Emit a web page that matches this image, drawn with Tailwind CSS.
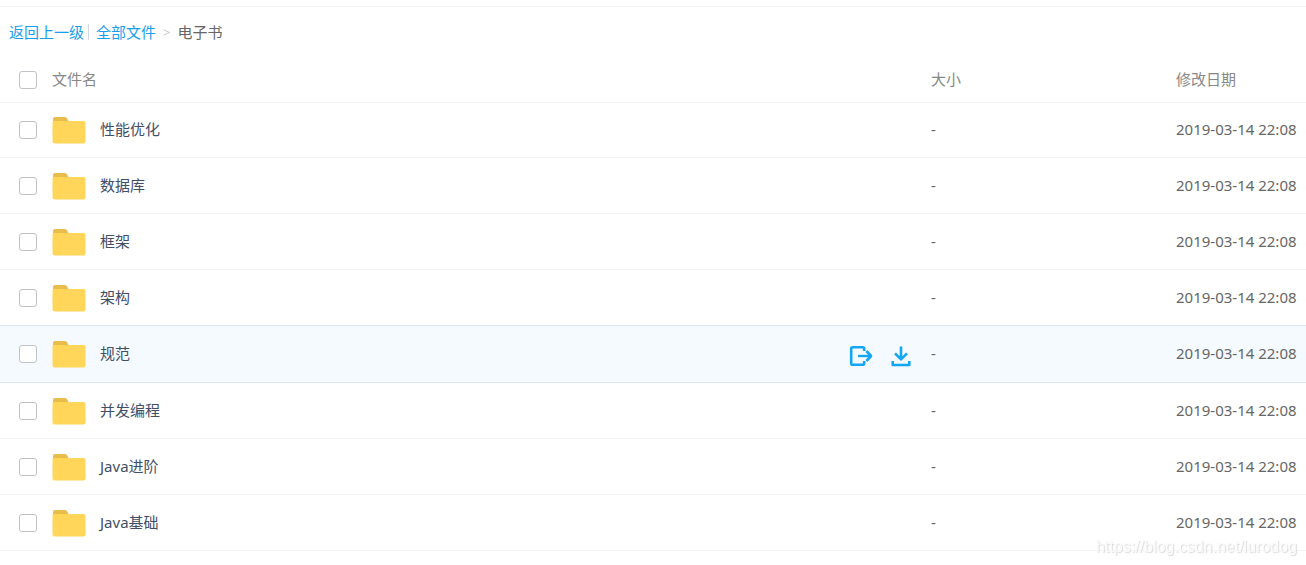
<!DOCTYPE html>
<html lang="zh-CN">
<head>
<meta charset="utf-8">
<meta name="viewport" content="width=device-width, initial-scale=1">
<title>电子书</title>
<script src="https://cdn.jsdelivr.net/npm/@tailwindcss/browser@4"></script>
</head>
<body class="bg-white font-['Noto_Sans','Noto_Sans_CJK_SC',sans-serif] text-[15px] leading-5 text-[#666]">
<svg class="hidden" aria-hidden="true">
  <symbol id="folder" viewBox="0 0 34 28">
    <path d="M1 10V3Q1 1 3 1H13Q14.500 1 15.200 2.500L16.500 5V10Z" fill="#e9bd4b"/>
    <path d="M.500 6Q.500 5 1.500 5H31.500Q33.500 5 33.500 7V25Q33.500 27.500 31.500 27.500H2.500Q.500 27.500 .500 25Z" fill="#ffd55a"/>
  </symbol>
</svg>
<div class="mt-1.5 border-t border-[#f2f4f6]">
  <nav aria-label="路径" class="flex h-12 items-center px-[9px] pt-px">
    <a href="#" class="text-[#1a9eea]">返回上一级</a>
    <span class="mx-1 h-4 w-px bg-[#d3d8e0]"></span>
    <a href="#" class="ml-[3px] text-[#1a9eea]">全部文件</a>
    <span class="mx-[7px] text-[13px] text-[#c4c8d0]">&gt;</span>
    <span>电子书</span>
  </nav>
  <table class="w-full table-fixed border-separate border-spacing-0 text-left [&_td]:border-b [&_td]:border-[#f2f4f6] [&_td]:p-0 [&_th]:border-b [&_th]:border-[#f2f4f6] [&_th]:p-0 [&_th]:font-normal">
    <colgroup><col class="w-[52px]"><col><col class="w-[245px]"><col class="w-[130px]"></colgroup>
    <thead>
      <tr class="h-12 text-[#888]">
        <th class="pt-0.5! pl-[19px]!"><input type="checkbox" aria-label="全选" class="block size-[18px] appearance-none rounded-[3px] border border-[#bfc3c8] bg-white checked:bg-[#09aaff]"></th>
        <th>文件名</th><th>大小</th><th>修改日期</th>
      </tr>
    </thead>
    <tbody id="files"></tbody>
  </table>
</div>
<p class="pointer-events-none fixed right-[9px] bottom-1.5 font-['Liberation_Sans',sans-serif] text-base text-[#fbfbfb] [text-shadow:1px_1px_1px_#dadada]">https://blog.csdn.net/lurodog</p>
<script>
const names = ['性能优化', '数据库', '框架', '架构', '规范', '并发编程', 'Java进阶', 'Java基础'];
const active = 4;
const actions = `
  <span class="flex items-center gap-[18px] pr-5 pt-1 text-[#12a6f5]">
    <button type="button" aria-label="分享" class="block cursor-pointer"><svg class="h-[22px] w-6" viewBox="0 0 24 22" fill="none" stroke="currentColor" stroke-width="2.600" stroke-linejoin="round"><path d="M15.200 6V3.700Q15.200 2.200 13.700 2.200H3.700Q2.200 2.200 2.200 3.700V18.300Q2.200 19.800 3.700 19.800H13.700Q15.200 19.800 15.200 18.300V16"/><path d="M9 11H22" stroke-width="2.400"/><path d="M17.400 6L22 11L17.400 16"/></svg></button>
    <button type="button" aria-label="下载" class="block cursor-pointer"><svg class="h-[22px] w-5" viewBox="0 0 20 22" fill="none" stroke="currentColor" stroke-width="2.600" stroke-linejoin="round"><path d="M10 1.500V14M4 8.300L10 14.300L16 8.300M1.700 16V20H18.300V16"/></svg></button>
  </span>`;
document.getElementById('files').innerHTML = names.map((name, i) => `
  <tr class="${i === active ? 'h-[57px] bg-[#f4faff] [&>td]:border-[#dce9f2]!' : i === active - 1 ? 'h-14 [&>td]:border-[#dce9f2]!' : i === 0 ? 'h-[55px]' : 'h-14'}">
    <td class="pl-[19px]!"><input type="checkbox" id="f${i}" class="block size-[18px] appearance-none rounded-[3px] border border-[#bfc3c8] bg-white checked:bg-[#09aaff]"></td>
    <td><div class="flex items-center justify-between">
      <label for="f${i}" class="flex items-center gap-3.5 text-[#424e67]"><svg class="h-7 w-[34px]" aria-hidden="true"><use href="#folder"/></svg><span class="pb-0.5">${name}</span></label>${i === active ? actions : ''}
    </div></td>
    <td class="pb-0.5!">-</td>
    <td class="pb-0.5! whitespace-nowrap">2019-03-14 22:08</td>
  </tr>`).join('');
</script>
</body>
</html>
